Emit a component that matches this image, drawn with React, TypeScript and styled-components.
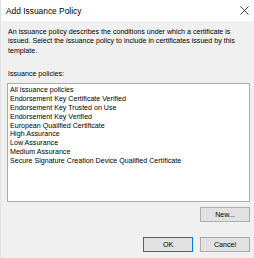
import styled, { createGlobalStyle } from "styled-components";

const GlobalStyle = createGlobalStyle`
    html, body {
        margin: 0;
        padding: 0;
        background: #f0f0f0;
    }
    body {
        font-family: "Liberation Sans", Arial, sans-serif;
        color: #000;
    }
`;

const policies = [
    "All issuance policies",
    "Endorsement Key Certificate Verified",
    "Endorsement Key Trusted on Use",
    "Endorsement Key Verified",
    "European Qualified Certificate",
    "High Assurance",
    "Low Assurance",
    "Medium Assurance",
    "Secure Signature Creation Device Qualified Certificate",
];

const Window = styled.div`
    width: 254px;
    height: 258px;
    display: flex;
    flex-direction: column;
    background: #f0f0f0;
    border-left: 1px solid #e2e2e2;
    box-sizing: border-box;
    overflow: hidden;
`;

const TitleBar = styled.div`
    height: 21px;
    flex: none;
    display: flex;
    align-items: center;
    justify-content: space-between;
    background: #fff;
    padding: 0 4px 0 5px;
    font-size: 8.4px;
`;

const CloseIcon = styled.svg`
    width: 9px;
    height: 9px;
    margin-right: 1px;
`;

const Body = styled.div`
    flex: 1;
    display: flex;
    flex-direction: column;
    padding: 7px 4px 0 6px;
    font-size: 7.1px;
    line-height: 9.3px;
`;

const Description = styled.p`
    margin: 0;
    padding-left: 1px;
`;

const Label = styled.div`
    margin-top: 14px;
    padding-left: 1px;
`;

const ListBox = styled.ul`
    list-style: none;
    margin: 4px 0 0;
    padding: 2px 2px;
    height: 119px;
    box-sizing: border-box;
    background: #fff;
    border: 1px solid #adadad;
    line-height: 8.85px;
`;

const Item = styled.li`
    white-space: nowrap;
`;

const ButtonRow = styled.div<{ $top: number }>`
    display: flex;
    justify-content: flex-end;
    gap: 7px;
    margin-top: ${(p) => p.$top}px;
`;

const Button = styled.button<{ $primary?: boolean }>`
    width: 50px;
    height: 15px;
    padding: 0;
    font-family: inherit;
    font-size: 7.1px;
    color: #000;
    background: #e1e1e1;
    border: 1px solid ${(p) => (p.$primary ? "#0078d7" : "#adadad")};
`;

export default function App() {
    return (
        <Window>
            <GlobalStyle />
            <TitleBar>
                <span>Add Issuance Policy</span>
                <CloseIcon viewBox="0 0 10 10">
                    <path d="M0.5 0.5 L9.5 9.5 M9.5 0.5 L0.5 9.5" stroke="#000" strokeWidth="0.8" fill="none" />
                </CloseIcon>
            </TitleBar>
            <Body>
                <Description>
                    An issuance policy describes the conditions under which a certificate is issued. Select the issuance
                    policy to include in certificates issued by this template.
                </Description>
                <Label>Issuance policies:</Label>
                <ListBox>
                    {policies.map((p) => (
                        <Item key={p}>{p}</Item>
                    ))}
                </ListBox>
                <ButtonRow $top={5}>
                    <Button>New...</Button>
                </ButtonRow>
                <ButtonRow $top={15}>
                    <Button $primary>OK</Button>
                    <Button>Cancel</Button>
                </ButtonRow>
            </Body>
        </Window>
    );
}
